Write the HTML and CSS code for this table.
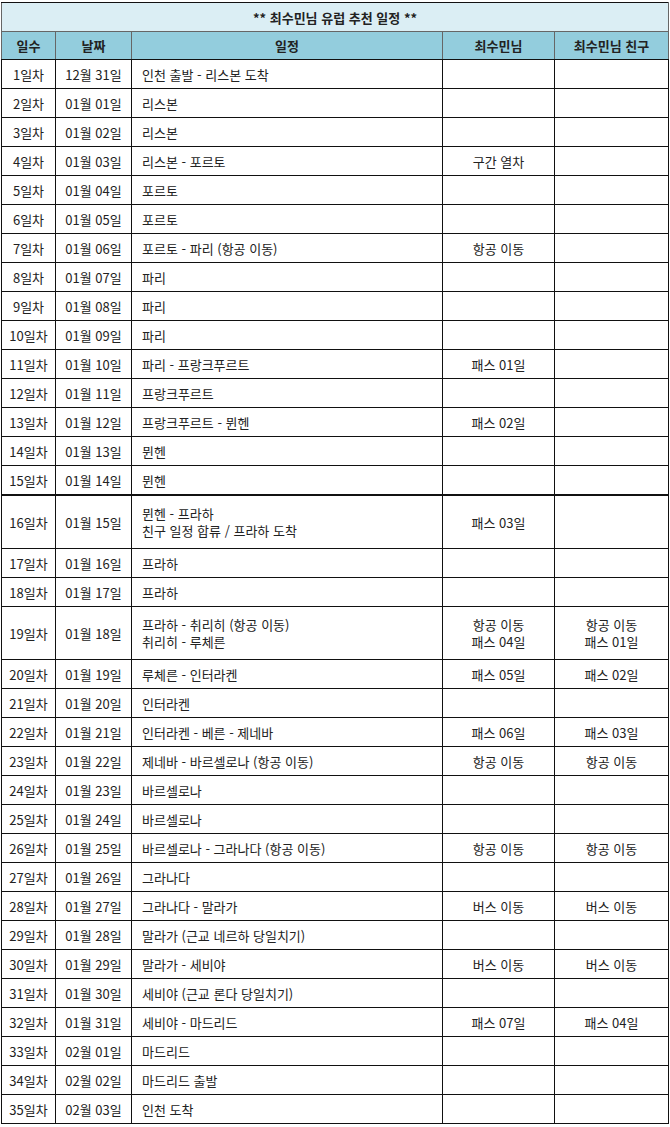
FILE: index.html
```html
<!DOCTYPE html>
<html lang="ko">
<head>
<meta charset="utf-8">
<title>최수민님 유럽 추천 일정</title>
<link rel="stylesheet" href="styles.css">
</head>
<body>
<table class="plan">
  <colgroup>
    <col class="c-day"><col class="c-date"><col class="c-plan"><col class="c-me"><col class="c-friend">
  </colgroup>
  <thead>
    <tr class="title-row"><th colspan="5">** 최수민님 유럽 추천 일정 **</th></tr>
    <tr class="head-row"><th>일수</th><th>날짜</th><th>일정</th><th>최수민님</th><th>최수민님 친구</th></tr>
  </thead>
  <tbody>
    <tr><td>1일차</td><td>12월 31일</td><td class="p">인천 출발 - 리스본 도착</td><td></td><td></td></tr>
    <tr><td>2일차</td><td>01월 01일</td><td class="p">리스본</td><td></td><td></td></tr>
    <tr><td>3일차</td><td>01월 02일</td><td class="p">리스본</td><td></td><td></td></tr>
    <tr><td>4일차</td><td>01월 03일</td><td class="p">리스본 - 포르토</td><td>구간 열차</td><td></td></tr>
    <tr><td>5일차</td><td>01월 04일</td><td class="p">포르토</td><td></td><td></td></tr>
    <tr><td>6일차</td><td>01월 05일</td><td class="p">포르토</td><td></td><td></td></tr>
    <tr><td>7일차</td><td>01월 06일</td><td class="p">포르토 - 파리 (항공 이동)</td><td>항공 이동</td><td></td></tr>
    <tr><td>8일차</td><td>01월 07일</td><td class="p">파리</td><td></td><td></td></tr>
    <tr><td>9일차</td><td>01월 08일</td><td class="p">파리</td><td></td><td></td></tr>
    <tr><td>10일차</td><td>01월 09일</td><td class="p">파리</td><td></td><td></td></tr>
    <tr><td>11일차</td><td>01월 10일</td><td class="p">파리 - 프랑크푸르트</td><td>패스 01일</td><td></td></tr>
    <tr><td>12일차</td><td>01월 11일</td><td class="p">프랑크푸르트</td><td></td><td></td></tr>
    <tr><td>13일차</td><td>01월 12일</td><td class="p">프랑크푸르트 - 뮌헨</td><td>패스 02일</td><td></td></tr>
    <tr><td>14일차</td><td>01월 13일</td><td class="p">뮌헨</td><td></td><td></td></tr>
    <tr><td>15일차</td><td>01월 14일</td><td class="p">뮌헨</td><td></td><td></td></tr>
    <tr class="tall join"><td>16일차</td><td>01월 15일</td><td class="p">뮌헨 - 프라하<br>친구 일정 합류 / 프라하 도착</td><td>패스 03일</td><td></td></tr>
    <tr><td>17일차</td><td>01월 16일</td><td class="p">프라하</td><td></td><td></td></tr>
    <tr><td>18일차</td><td>01월 17일</td><td class="p">프라하</td><td></td><td></td></tr>
    <tr class="tall"><td>19일차</td><td>01월 18일</td><td class="p">프라하 - 취리히 (항공 이동)<br>취리히 - 루체른</td><td>항공 이동<br>패스 04일</td><td>항공 이동<br>패스 01일</td></tr>
    <tr><td>20일차</td><td>01월 19일</td><td class="p">루체른 - 인터라켄</td><td>패스 05일</td><td>패스 02일</td></tr>
    <tr><td>21일차</td><td>01월 20일</td><td class="p">인터라켄</td><td></td><td></td></tr>
    <tr><td>22일차</td><td>01월 21일</td><td class="p">인터라켄 - 베른 - 제네바</td><td>패스 06일</td><td>패스 03일</td></tr>
    <tr><td>23일차</td><td>01월 22일</td><td class="p">제네바 - 바르셀로나 (항공 이동)</td><td>항공 이동</td><td>항공 이동</td></tr>
    <tr><td>24일차</td><td>01월 23일</td><td class="p">바르셀로나</td><td></td><td></td></tr>
    <tr><td>25일차</td><td>01월 24일</td><td class="p">바르셀로나</td><td></td><td></td></tr>
    <tr><td>26일차</td><td>01월 25일</td><td class="p">바르셀로나 - 그라나다 (항공 이동)</td><td>항공 이동</td><td>항공 이동</td></tr>
    <tr><td>27일차</td><td>01월 26일</td><td class="p">그라나다</td><td></td><td></td></tr>
    <tr><td>28일차</td><td>01월 27일</td><td class="p">그라나다 - 말라가</td><td>버스 이동</td><td>버스 이동</td></tr>
    <tr><td>29일차</td><td>01월 28일</td><td class="p">말라가 (근교 네르하 당일치기)</td><td></td><td></td></tr>
    <tr><td>30일차</td><td>01월 29일</td><td class="p">말라가 - 세비야</td><td>버스 이동</td><td>버스 이동</td></tr>
    <tr><td>31일차</td><td>01월 30일</td><td class="p">세비야 (근교 론다 당일치기)</td><td></td><td></td></tr>
    <tr><td>32일차</td><td>01월 31일</td><td class="p">세비야 - 마드리드</td><td>패스 07일</td><td>패스 04일</td></tr>
    <tr><td>33일차</td><td>02월 01일</td><td class="p">마드리드</td><td></td><td></td></tr>
    <tr><td>34일차</td><td>02월 02일</td><td class="p">마드리드 출발</td><td></td><td></td></tr>
    <tr><td>35일차</td><td>02월 03일</td><td class="p">인천 도착</td><td></td><td></td></tr>
  </tbody>
</table>
</body>
</html>
```

FILE: styles.css
```css
html, body {
  margin: 0;
  padding: 0;
  background: #ffffff;
}
body {
  padding: 2px 0 0 1px;
  font-family: "Noto Sans CJK KR", "Noto Sans", sans-serif;
  font-size: 13px;
  color: #222;
}
.plan {
  border-collapse: collapse;
  table-layout: fixed;
  width: 667px;
  border: 1px solid #111;
}
.c-day { width: 54px; }
.c-date { width: 76px; }
.c-plan { width: 311px; }
.c-me { width: 112px; }
.c-friend { width: 114px; }

.plan th, .plan td {
  border: 1px solid #111;
  padding: 0;
  text-align: center;
  vertical-align: middle;
  line-height: 17px;
  height: 28px;
  white-space: nowrap;
  overflow: hidden;
}
.plan th {
  font-weight: bold;
  color: #222;
  border-color: #666;
}
.title-row th {
  background: #dbeef4;
  height: 28px;
  border-top-color: #111;
}
.head-row th {
  background: #93cddd;
  height: 27px;
  border-bottom-color: #111;
}
.plan td.p {
  text-align: left;
  padding-left: 10px;
}
.plan tr.tall td {
  height: 52px;
}
.plan tr.join td {
  border-top: 2px solid #111;
}
```
